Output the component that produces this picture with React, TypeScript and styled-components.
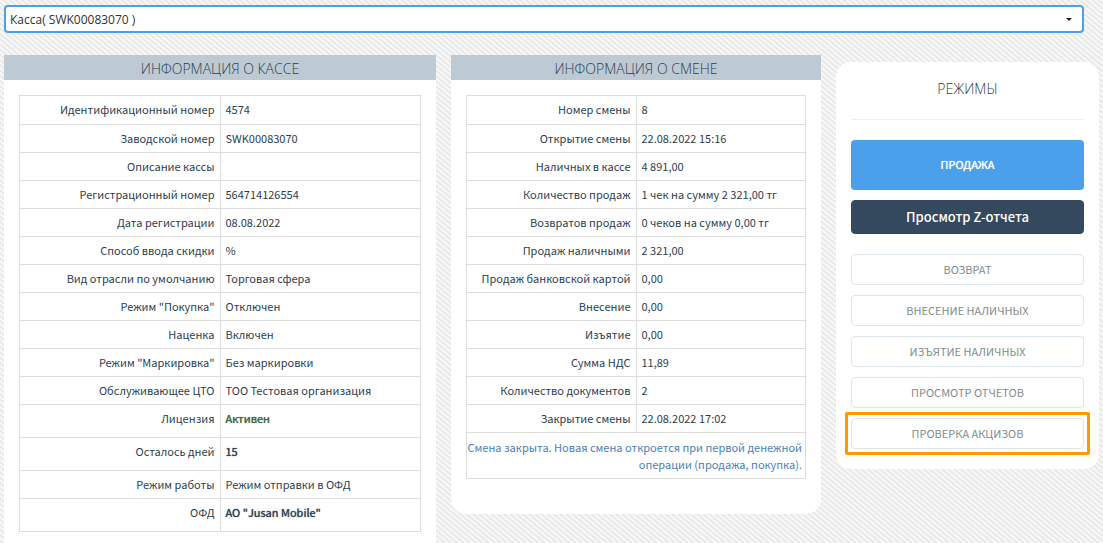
import React from "react";
import styled, { createGlobalStyle, css } from "styled-components";

const GlobalStyle = createGlobalStyle`
  * { box-sizing: border-box; }
  body {
    margin: 0;
    color: #2c3e50;
    font-family: "Noto Sans CJK SC", "Open Sans", sans-serif;
    font-size: 11px;
    line-height: 17px;
    background-color: #f3f3f3;
    background-image: repeating-linear-gradient(
      40deg,
      #e9e9e9 0,
      #e9e9e9 1px,
      #f8f8f8 2px,
      #f8f8f8 3px,
      #e9e9e9 4px
    );
  }
`;

const Page = styled.main`
  padding: 5px 4px 0;
`;

const SelectWrap = styled.div`
  display: grid;
  align-items: center;
  margin: 0 15px 22px 0;
`;

const RegisterSelect = styled.select`
  grid-area: 1 / 1;
  appearance: none;
  width: 100%;
  height: 28px;
  padding: 0 24px 0 4px;
  border: 2px solid #4aa0eb;
  border-radius: 4px;
  background: #fff;
  color: #333;
  font: 12px "Open Sans", sans-serif;
`;

const Caret = styled.svg`
  grid-area: 1 / 1;
  justify-self: end;
  margin-right: 12px;
  pointer-events: none;
`;

const Columns = styled.div`
  display: grid;
  grid-template-columns: minmax(0, 432fr) minmax(0, 370fr) minmax(0, 263fr);
  gap: 15px;
  align-items: start;
`;

const InfoPanel = styled.section`
  padding-bottom: 35px;
  border-radius: 0 0 15px 15px;
  background: #fff;
`;

const titleFont = css`
  margin: 0;
  font-family: "Open Sans", sans-serif;
  font-size: 14px;
  font-weight: 300;
  text-align: center;
  text-transform: uppercase;
`;

const PanelTitle = styled.h2`
  ${titleFont}
  padding-top: 2px;
  line-height: 23px;
  background: #bdcad4;
`;

const DataTable = styled.table`
  width: calc(100% - 30px);
  margin: 15px 15px 0;
  border-collapse: collapse;
  table-layout: fixed;

  tr:first-child > * {
    padding-bottom: 6px;
  }
`;

const cell = css`
  padding: 5px;
  border: 1px solid #ddd;
  font-weight: 400;
  vertical-align: top;
`;

const LabelCell = styled.th`
  ${cell}
  text-align: right;
`;

const ValueCell = styled.td`
  ${cell}
`;

const NoteCell = styled.td`
  ${cell}
  padding: 6px 3px 5px 0;
  color: #4a7ebb;
  text-align: right;
`;

const Strong = styled.p<{ $color?: string }>`
  margin: 0 0 5px;
  color: ${(p) => p.$color ?? "inherit"};
  text-shadow: 0 0 1px currentColor;
`;

const ModesPanel = styled.aside`
  display: flex;
  flex-direction: column;
  gap: 10px;
  margin-top: 7px;
  padding: 15px 15px 20px;
  border-radius: 15px;
  background: #fff;
`;

const ModesTitle = styled.h2`
  ${titleFont}
  line-height: 24px;
  padding-bottom: 18px;
  margin-bottom: 10px;
  border-bottom: 1px solid #eee;
`;

const Button = styled.button`
  width: 100%;
  padding: 0 0 2px;
  border-radius: 4px;
  font-family: inherit;
  text-align: center;
`;

const SaleButton = styled(Button)`
  height: 50px;
  border: 0;
  background: #4aa0eb;
  color: #fff;
  font-size: 11px;
  text-transform: uppercase;
  text-shadow: 0 0 1px currentColor;
`;

const ReportButton = styled(Button)`
  height: 34px;
  margin-bottom: 10px;
  border: 1px solid #34495e;
  background: #34495e;
  color: #fff;
  font-size: 13px;
  font-weight: 500;
`;

const ModeButton = styled(Button)<{ $marked?: boolean }>`
  position: relative;
  height: 31px;
  border: 1px solid #dce4ec;
  background: #fff;
  color: #7f8c8d;
  font-size: 11px;
  text-transform: uppercase;
  ${(p) =>
    p.$marked &&
    css`
      &::after {
        content: "";
        position: absolute;
        inset: -7px;
        border: 3px solid #ff9900;
        border-radius: 2px;
      }
    `}
`;

type Row = [label: string, value: React.ReactNode];

const registerRows: Row[] = [
  ["Идентификационный номер", "4574"],
  ["Заводской номер", "SWK00083070"],
  ["Описание кассы", ""],
  ["Регистрационный номер", "564714126554"],
  ["Дата регистрации", "08.08.2022"],
  ["Способ ввода скидки", "%"],
  ["Вид отрасли по умолчанию", "Торговая сфера"],
  ['Режим "Покупка"', "Отключен"],
  ["Наценка", "Включен"],
  ['Режим "Маркировка"', "Без маркировки"],
  ["Обслуживающее ЦТО", "ТОО Тестовая организация"],
  ["Лицензия", <Strong $color="#3c663d">Активен</Strong>],
  ["Осталось дней", <Strong>15</Strong>],
  ["Режим работы", "Режим отправки в ОФД"],
  ["ОФД", <Strong>АО "Jusan Mobile"</Strong>],
];

const shiftRows: Row[] = [
  ["Номер смены", "8"],
  ["Открытие смены", "22.08.2022 15:16"],
  ["Наличных в кассе", "4 891,00"],
  ["Количество продаж", "1 чек на сумму 2 321,00 тг"],
  ["Возвратов продаж", "0 чеков на сумму 0,00 тг"],
  ["Продаж наличными", "2 321,00"],
  ["Продаж банковской картой", "0,00"],
  ["Внесение", "0,00"],
  ["Изъятие", "0,00"],
  ["Сумма НДС", "11,89"],
  ["Количество документов", "2"],
  ["Закрытие смены", "22.08.2022 17:02"],
];

const modes = [
  "Возврат",
  "Внесение наличных",
  "Изъятие наличных",
  "Просмотр отчетов",
  "Проверка акцизов",
];

function InfoTable({ title, rows, note }: { title: string; rows: Row[]; note?: string }) {
  return (
    <InfoPanel>
      <PanelTitle>{title}</PanelTitle>
      <DataTable>
        <tbody>
          {rows.map(([label, value]) => (
            <tr key={label}>
              <LabelCell scope="row">{label}</LabelCell>
              <ValueCell>{value}</ValueCell>
            </tr>
          ))}
          {note && (
            <tr>
              <NoteCell colSpan={2}>{note}</NoteCell>
            </tr>
          )}
        </tbody>
      </DataTable>
    </InfoPanel>
  );
}

export default function App() {
  return (
    <>
      <GlobalStyle />
      <Page>
        <SelectWrap>
          <RegisterSelect aria-label="Касса">
            <option>Касса( SWK00083070 )</option>
          </RegisterSelect>
          <Caret width="6" height="3" viewBox="0 0 6 3" aria-hidden="true">
            <path d="M0 0h6L3 3z" fill="#222" />
          </Caret>
        </SelectWrap>
        <Columns>
          <InfoTable title="Информация о кассе" rows={registerRows} />
          <InfoTable
            title="Информация о смене"
            rows={shiftRows}
            note="Смена закрыта. Новая смена откроется при первой денежной операции (продажа, покупка)."
          />
          <ModesPanel>
            <ModesTitle>Режимы</ModesTitle>
            <SaleButton type="button">Продажа</SaleButton>
            <ReportButton type="button">Просмотр Z-отчета</ReportButton>
            {modes.map((mode) => (
              <ModeButton key={mode} type="button" $marked={mode === "Проверка акцизов"}>
                {mode}
              </ModeButton>
            ))}
          </ModesPanel>
        </Columns>
      </Page>
    </>
  );
}
